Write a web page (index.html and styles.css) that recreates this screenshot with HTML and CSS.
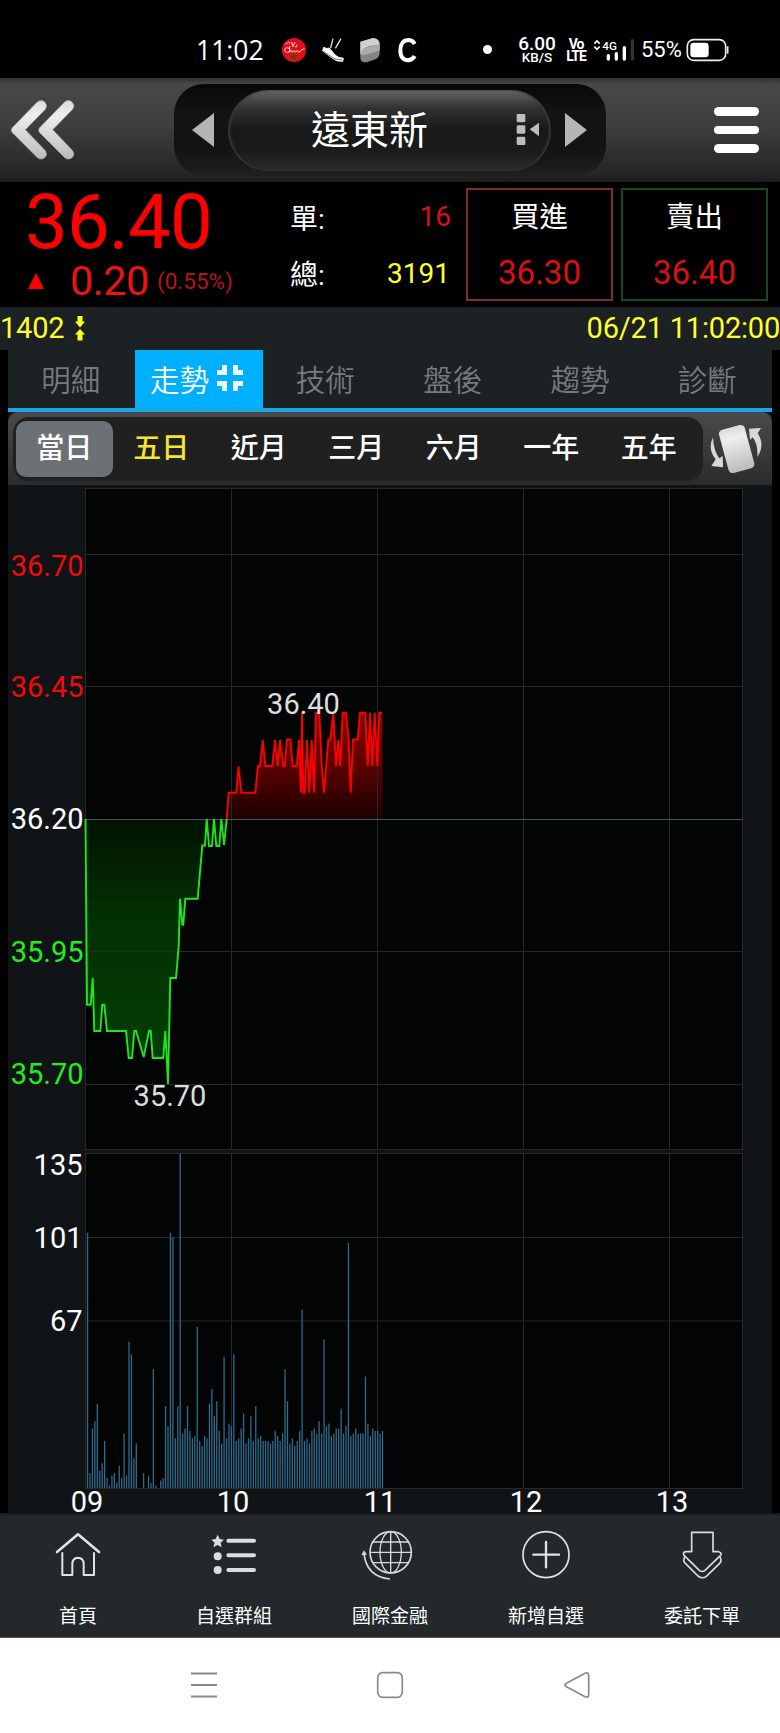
FILE: index.html
```html
<!DOCTYPE html>
<html lang="zh-Hant">
<head>
  <meta charset="UTF-8">
  <meta name="viewport" content="width=device-width, initial-scale=1.0">
  <title>遠東新 1402</title>
  <link rel="stylesheet" href="styles.css">
</head>
<body>
  <div class="status">
    <span class="clock">11:02</span>
    <svg class="app-red" width="26" height="26" viewBox="844 109 78 78">
      <circle cx="883" cy="148" r="36" fill="#e00e18"/>
      <g fill="none" stroke="#ffd9d9" stroke-width="3">
        <path d="M860 129q8-9 12 0M876 124l4 14 6-14M886 138q9 2 5-6M868 143q-12-6-13 6q3 11 13 4M870 136v19q4-11 9 0q5-10 9 0q5-10 9 0l9-7 8-4M858 128l-3 3"/>
      </g>
      <rect x="873" y="161" width="18" height="15" fill="#6d3d10"/>
    </svg>
    <svg class="app-shoe" width="24" height="26" viewBox="962 112 72 78">
      <path d="M970 143q9 6 17 2l17 21q9 9 25 10l-2 9q-18 1-29-8l-31-23z" fill="#fff" stroke="#fff" stroke-width="3"/>
      <path d="M969 155l32 22 25 4" fill="none" stroke="#222" stroke-width="2"/>
      <path d="M998 117l-7 28M1022 117l-17 29M987 146l5 8" fill="none" stroke="#ddd" stroke-width="4"/>
    </svg>
    <svg class="app-box" width="22" height="26" viewBox="1077 111 66 78">
      <path d="M1081 125l38-11q20 2 20 18v30q-2 12-17 17l-22 8q-19 1-19-14z" fill="#858585"/>
      <path d="M1081 125l38-11q20 2 20 20l-30 4q-22 5-25 22l-3 2z" fill="#d0d0d0"/>
      <path d="M1081 163q4-20 27-23l31-5v16l-35 12q-17 5-23 0z" fill="#acacac"/>
    </svg>
    <svg class="app-c" width="22" height="26" viewBox="51 111 66 78">
      <path d="M104 132q-6-12-20-12q-23 2-23 31q0 29 23 30q14-1 20-13" fill="none" stroke="#fff" stroke-width="12"/>
    </svg>
    <i class="dot"></i>
    <span class="speed"><b>6.00</b><b class="unit">KB/S</b></span>
    <span class="volte"><b>Vo</b><b>LTE</b></span>
    <svg class="signal" width="44" height="26" viewBox="639 111 132 78">
      <path d="M643 131l8-8 8 8M643 140l8 8 8-8" fill="none" stroke="#fff" stroke-width="5"/>
      <text x="667" y="149" class="sig-text">4G</text>
      <path d="M685 167v10M709 161v16M733 143v34" stroke="#fff" stroke-width="10" stroke-linecap="round"/>
      <path d="M757 122v55" stroke="#333" stroke-width="10" stroke-linecap="round"/>
    </svg>
    <span class="percent">55%</span>
    <svg class="battery" width="44" height="26" viewBox="922 111 132 78">
      <rect x="926" y="119" width="115" height="62" rx="19" fill="none" stroke="#eee" stroke-width="5"/>
      <rect x="935" y="128" width="55" height="44" rx="10" fill="#fff"/>
      <path d="M1047 139v22" stroke="#eee" stroke-width="5"/>
    </svg>
  </div>

  <header class="header">
    <svg class="back" width="70" height="64" viewBox="24 294 210 192">
      <defs>
        <linearGradient id="silver" x1="0" y1="0" x2="0" y2="1">
          <stop offset="0" stop-color="#dcdcdc"/>
          <stop offset=".25" stop-color="#eee"/>
          <stop offset="1" stop-color="#bbb"/>
        </linearGradient>
      </defs>
      <g fill="url(#silver)" stroke="#aaa" stroke-width="2">
        <path d="M36 384L111 307Q122 297 134 306Q144 316 136 328L76 389L136 452Q144 464 134 473Q122 482 111 472L36 397Q32 390 36 384Z"/>
        <path d="M118 384L193 307Q204 297 216 306Q226 316 218 328L158 389L218 452Q226 464 216 473Q204 482 193 472L118 397Q114 390 118 384Z"/>
      </g>
    </svg>
    <div class="selector">
      <svg width="22" height="34" viewBox="0 0 22 34"><path d="M0 17L22 0V34z" fill="#b5b5b5"/></svg>
      <div class="pill">
        <span class="stock-name">遠東新</span>
        <svg class="pick" width="24" height="34" viewBox="411 337 72 102">
          <g fill="#bdbdbd">
            <rect x="413" y="340" width="26" height="25" rx="4"/>
            <rect x="413" y="374" width="26" height="25" rx="4"/>
            <rect x="413" y="408" width="26" height="25" rx="4"/>
            <path d="M452 386l28-20v41z"/>
          </g>
        </svg>
      </div>
      <svg width="22" height="34" viewBox="0 0 22 34"><path d="M22 17L0 0V34z" fill="#b5b5b5"/></svg>
    </div>
    <div class="menu"><i></i><i></i><i></i></div>
  </header>

  <section class="quote">
    <div class="price">
      <div class="last">36.40</div>
      <div class="change">
        <svg width="16" height="16" viewBox="0 0 16 16"><path d="M8 0L16 16H0z" fill="#f00"/></svg>
        <span class="diff">0.20</span>
        <span class="pct">(0.55%)</span>
      </div>
    </div>
    <dl class="volume">
      <dt>單:</dt><dd class="red">16</dd>
      <dt>總:</dt><dd class="yellow">3191</dd>
    </dl>
    <div class="box buy"><span>買進</span><b>36.30</b></div>
    <div class="box sell"><span>賣出</span><b>36.40</b></div>
  </section>

  <div class="info">
    <span>1402</span>
    <svg class="swap" width="10" height="25" viewBox="0 0 10 25">
      <path d="M2.500 0H7.500V5.500H10L5 11.500L0 5.500H2.500zM2.500 24.500H7.500V18.500H10L5 13L0 18.500H2.500z" fill="#ff2"/>
    </svg>
    <span class="time">06/21 11:02:00</span>
  </div>

  <main class="panel">
    <nav class="tabs">
      <a>明細</a>
      <a class="active">走勢
        <svg width="28" height="28" viewBox="0 0 28 28">
          <path d="M8.500 1V8.500H1M19.500 1V8.500H27M8.500 27V19.500H1M19.500 27V19.500H27" fill="none" stroke="#eafaff" stroke-width="5"/>
        </svg>
      </a>
      <a>技術</a>
      <a>盤後</a>
      <a>趨勢</a>
      <a>診斷</a>
    </nav>

    <div class="range">
      <div class="range-list">
        <a class="on">當日</a>
        <a class="yellow">五日</a>
        <a>近月</a>
        <a>三月</a>
        <a>六月</a>
        <a>一年</a>
        <a>五年</a>
      </div>
      <svg class="rotate" width="54" height="50" viewBox="990 248 162 150">
        <rect x="1033" y="256" width="80" height="134" rx="13" transform="rotate(-15 1073 323)" fill="url(#silver)"/>
        <path d="M1002 288Q985 322 1010 354L997 374L1032 378L1031 344L1021 351Q1004 330 1002 288zM1110 262L1146 260L1136 276Q1159 310 1135 347Q1138 309 1121 288L1113 296z" fill="#d8d8d8"/>
      </svg>
    </div>

    <svg class="chart" width="764" height="1029" viewBox="8 484 764 1029">
      <defs>
        <linearGradient id="down" gradientUnits="userSpaceOnUse" x1="0" y1="819" x2="0" y2="1084">
          <stop offset="0" stop-color="#031203"/>
          <stop offset=".35" stop-color="#033003"/>
          <stop offset="1" stop-color="#044004"/>
        </linearGradient>
        <linearGradient id="up" gradientUnits="userSpaceOnUse" x1="0" y1="712" x2="0" y2="819">
          <stop offset="0" stop-color="#8a0000"/>
          <stop offset=".5" stop-color="#5c0000"/>
          <stop offset="1" stop-color="#1c0202"/>
        </linearGradient>
      </defs>
      <rect x="85" y="488" width="658" height="662" fill="#030504"/>
      <rect x="85" y="1153" width="658" height="335" fill="#030504"/>

      <path fill="url(#down)" d="M85.500 819L87 1004.700H90.700L92.700 978L94.300 1031H100.300L102.300 1004.700H104.300L107 1031H126L128.700 1058H132L134.300 1031H136L143.700 1057L149 1031H150.700L152.700 1058H163.300L165.300 1031L168 1084L170.300 978H176L178.700 946L180 898.700L182.300 924.700H183.300L185.300 898.700H197.700L202.300 845.500H205L206.700 819L209 846H212L214 819L216.300 846H219.300L221.300 819L224 845L226.700 819Z"/>
      <path fill="url(#up)" d="M226.700 819L228.700 792.700H236.300L238.500 766.300L241.300 792.700H255.300L258 766H260L262.700 740L265.300 766H272.300L275 740L277.700 766L280 740L283.300 766H284.700L287 739.500H290.300L292.700 766H296.700L299 740L301 792.700L302 712.700L303.300 792.700H304.700L307 740L309.300 792.700L311.700 740L314 792.700L316 712.700H319.300L321.700 766L324 792.700L328.300 739.500H330.300L333.300 712.700L336 766L338.300 740L340.300 766L342.700 712.700H346L348.700 740L350.700 792.700L353 739.500H357.700L360 712.700H365.300L367.700 766L370 712.700L372.300 766L374.700 712.700L377.300 766L379.300 712.700H382L383 819Z"/>

      <!-- grid -->
      <g stroke="#262929">
        <path d="M85.500 488V1150M231.500 488V1150M377.500 488V1150M523.500 488V1150M669.500 488V1150M742.500 488V1150"/>
        <path d="M85 488.500H743M85 554.500H743M85 686.500H743M85 951.500H743M85 1084.500H743M85 1149.500H743"/>
        <path d="M85.500 1153V1488M231.500 1153V1488M377.500 1153V1488M523.500 1153V1488M669.500 1153V1488M742.500 1153V1488"/>
        <path d="M85 1153.500H743M85 1237.500H743M85 1321H743M85 1488.500H743"/>
      </g>
      <path d="M85 819.500H743" stroke="#48565c"/>
      <g id="bars" fill="#306a8c"></g>

      <path class="line" stroke="#1fe51f" d="M85.500 819L87 1004.700H90.700L92.700 978L94.300 1031H100.300L102.300 1004.700H104.300L107 1031H126L128.700 1058H132L134.300 1031H136L143.700 1057L149 1031H150.700L152.700 1058H163.300L165.300 1031L168 1084L170.300 978H176L178.700 946L180 898.700L182.300 924.700H183.300L185.300 898.700H197.700L202.300 845.500H205L206.700 819L209 846H212L214 819L216.300 846H219.300L221.300 819L224 845L226.700 819"/>
      <path class="line" stroke="#fa0000" d="M226.700 819L228.700 792.700H236.300L238.500 766.300L241.300 792.700H255.300L258 766H260L262.700 740L265.300 766H272.300L275 740L277.700 766L280 740L283.300 766H284.700L287 739.500H290.300L292.700 766H296.700L299 740L301 792.700L302 712.700L303.300 792.700H304.700L307 740L309.300 792.700L311.700 740L314 792.700L316 712.700H319.300L321.700 766L324 792.700L328.300 739.500H330.300L333.300 712.700L336 766L338.300 740L340.300 766L342.700 712.700H346L348.700 740L350.700 792.700L353 739.500H357.700L360 712.700H365.300L367.700 766L370 712.700L372.300 766L374.700 712.700L377.300 766L379.300 712.700H382"/>

      <g class="axis" text-anchor="end">
        <text x="83.500" y="576" fill="#f00a0a">36.70</text>
        <text x="83.500" y="697" fill="#f00a0a">36.45</text>
        <text x="83.500" y="829" fill="#fff">36.20</text>
        <text x="83.500" y="962" fill="#1fee1f">35.95</text>
        <text x="83.500" y="1084" fill="#1fee1f">35.70</text>
        <text x="82.500" y="1175" fill="#fff">135</text>
        <text x="82.500" y="1248" fill="#fff">101</text>
        <text x="82.500" y="1331" fill="#fff">67</text>
      </g>
      <g class="axis" text-anchor="middle" fill="#fff">
        <text x="303.500" y="713.500" fill="#ddd">36.40</text>
        <text x="170" y="1106" fill="#ddd">35.70</text>
        <text x="87" y="1512">09</text>
        <text x="233" y="1512">10</text>
        <text x="380" y="1512">11</text>
        <text x="526" y="1512">12</text>
        <text x="672" y="1512">13</text>
      </g>
    </svg>
  </main>

  <footer class="bottom">
    <a>
      <svg width="48" height="50" viewBox="162 90 144 150">
        <g fill="none" stroke="#e2e2e2" stroke-width="6" stroke-linecap="round" stroke-linejoin="round">
          <path d="M171 156L234 103L297 156" stroke-width="8"/>
          <path d="M187 159V225H217V190Q218 174 234 173Q250 174 251 190V225H282V159"/>
        </g>
      </svg>
      首頁
    </a>
    <a>
      <svg width="48" height="50" viewBox="629 90 144 150">
        <path d="M652 104l6 13 13 2-10 9 3 14-12-7-13 7 4-14-10-9 13-2z" fill="#ddd"/>
        <circle cx="652" cy="169" r="12" fill="#ddd"/>
        <circle cx="652" cy="210" r="12" fill="#ddd"/>
        <path d="M684 122H761M684 166H761M684 210H761" stroke="#ddd" stroke-width="12" stroke-linecap="round"/>
      </svg>
      自選群組
    </a>
    <a>
      <svg class="globe" width="54" height="50" viewBox="1087 90 162 150">
        <g fill="none" stroke="#d6dadb" stroke-width="4">
          <circle cx="1176" cy="157" r="62" stroke-width="5"/>
          <ellipse cx="1176" cy="157" rx="32" ry="62"/>
          <path d="M1176 95V219M1114 157H1238M1122 126H1230M1122 188H1230"/>
          <path d="M1096 160Q1103 230 1174 237" stroke-width="5"/>
        </g>
        <path d="M1088 166L1096 151L1105 164z" fill="#d6dadb"/>
      </svg>
      國際金融
    </a>
    <a>
      <svg width="50" height="50" viewBox="423 89 150 150">
        <circle cx="498" cy="163" r="69" fill="none" stroke="#e2e2e2" stroke-width="5"/>
        <path d="M460 163H537M498 125V201" stroke="#e2e2e2" stroke-width="7" stroke-linecap="round"/>
      </svg>
      新增自選
    </a>
    <a>
      <svg width="44" height="50" viewBox="899 89 132 150">
        <g fill="none" stroke="#d9dcdd" stroke-width="5" stroke-linejoin="round">
          <path d="M934 96H998V154H1015Q1027 158 1020 166L974 210Q966 217 957 210L912 166Q905 157 916 154H934Z"/>
          <path d="M914 168Q907 180 913 187L953 227Q966 237 978 228L1018 189Q1026 181 1018 168"/>
        </g>
      </svg>
      委託下單
    </a>
  </footer>

  <div class="sysnav">
    <svg width="26" height="28" viewBox="0 0 26 28"><path d="M0 2.500H26M0 14H26M0 25.500H26" stroke="#8a8a8a" stroke-width="1.800"/></svg>
    <svg width="28" height="28" viewBox="0 0 28 28"><rect x="1.700" y="1.700" width="24.600" height="24.600" rx="5" fill="none" stroke="#8a8a8a" stroke-width="1.700"/></svg>
    <svg width="28" height="28" viewBox="0 0 28 28"><path d="M3 12.500L22 2.300Q25.500 1 25.700 4V24Q25.500 27 22 25.700L3 15.500Q1 14 3 12.500z" fill="none" stroke="#8a8a8a" stroke-width="1.700"/></svg>
  </div>

  <script>
    // volume per minute from 09:00
    const volumes = [
      103, 6, 24, 27, 34, 7, 10, 19, 4, 1, 5, 6, 2, 9, 4, 22, 5, 59, 54, 12,
      18, 0, 0, 6, 0, 5, 2, 48, 1, 0, 3, 4, 33, 25, 103, 101, 20, 33, 135, 22,
      24, 33, 23, 20, 21, 65, 19, 17, 21, 20, 34, 40, 29, 35, 23, 18, 53, 20, 26, 25,
      54, 19, 20, 24, 30, 18, 20, 29, 19, 33, 20, 21, 19, 19, 19, 18, 19, 23, 21, 19,
      22, 48, 35, 18, 20, 17, 19, 23, 72, 19, 20, 18, 23, 24, 22, 27, 22, 60, 25, 26,
      21, 22, 24, 24, 32, 22, 25, 99, 21, 22, 24, 22, 22, 22, 45, 26, 21, 24, 23, 23,
      22, 23
    ];
    const bars = document.getElementById('bars');
    volumes.forEach((v, i) => {
      const rect = document.createElementNS('http://www.w3.org/2000/svg', 'rect');
      const h = v * 334.5 / 135;
      rect.setAttribute('x', (86.9 + i * 2.438).toFixed(2));
      rect.setAttribute('y', (1488 - h).toFixed(1));
      rect.setAttribute('width', 1.3);
      rect.setAttribute('height', h.toFixed(1));
      bars.appendChild(rect);
    });
  </script>
</body>
</html>
```
FILE: styles.css
```css
* {
  box-sizing: border-box;
}

body {
  margin: 0;
  width: 780px;
  background: #000;
  color: #fff;
  font-family: Roboto, "Noto Sans CJK TC", sans-serif;
}

svg {
  display: block;
  flex: none;
}

.red {
  color: #dc1010;
}

.yellow {
  color: #ffff2a;
}

/* status bar */
.status {
  display: flex;
  align-items: center;
  height: 78px;
  padding: 21px 0 0 196px;
  font-family: "Open Sans", sans-serif;
}

.clock {
  width: 85px;
  font-size: 26.500px;
}

.app-shoe {
  margin-left: 14px;
}

.app-box {
  margin-left: 14px;
}

.app-c {
  margin-left: 16px;
}

.dot {
  width: 9px;
  height: 9px;
  margin-left: 64px;
  border-radius: 50%;
  background: #fff;
}

.speed,
.volte {
  display: flex;
  flex-direction: column;
  align-items: center;
  font-family: Roboto, sans-serif;
}

.speed {
  width: 38px;
  margin-left: 26px;
}

.speed b {
  font-size: 19px;
  line-height: 15px;
  font-weight: 500;
}

.speed .unit {
  font-size: 13.500px;
  line-height: 13px;
}

.volte {
  width: 18px;
  margin-left: 11px;
}

.volte b {
  font-size: 14px;
  line-height: 12px;
  letter-spacing: -1px;
}

.signal {
  margin-left: 8px;
}

.sig-text {
  font: 500 35px Roboto, sans-serif;
  fill: #fff;
}

.percent {
  width: 46px;
  margin-left: 4px;
  font: 22px Roboto, sans-serif;
}

.battery {
  margin-left: -1px;
}

/* header */
.header {
  display: grid;
  grid-template-columns: 174px 432px 174px;
  align-items: center;
  height: 104px;
  background: linear-gradient(#303030, #484848 6%, #3e3e3e 45%, #252525 94%, #1a1a1a);
}

.back {
  margin-left: 8px;
}

.selector {
  display: flex;
  align-items: center;
  justify-content: space-between;
  height: 92px;
  padding: 0 19px 0 18px;
  border-radius: 30px;
  background: linear-gradient(#080808, #131313 30%, #131313 70%, #202020);
}

.pill {
  display: flex;
  align-items: center;
  justify-content: flex-end;
  width: 323px;
  height: 81px;
  padding-right: 11px;
  border-radius: 41px;
  background: linear-gradient(#646464, #333 22%, #181818 48%, #1b1b1b 75%, #2b2b2b);
  box-shadow: inset 2px 0 2px #383838, inset -2px 0 2px #383838;
}

.stock-name {
  margin-right: 88px;
  padding-top: 2px;
  font-size: 39px;
  line-height: 60px;
}

.menu {
  display: flex;
  flex-direction: column;
  gap: 10px;
  width: 45px;
  margin-left: 108px;
}

.menu i {
  height: 8.500px;
  border-radius: 5px;
  background: #fff;
}

/* quote */
.quote {
  display: flex;
  height: 125px;
  padding-top: 6px;
}

.price {
  width: 290px;
  padding-left: 25px;
  color: #f00;
}

.last {
  height: 67px;
  font-size: 76px;
  line-height: 68px;
  letter-spacing: -0.800px;
}

.change {
  display: flex;
  align-items: center;
  height: 52px;
  padding-left: 3px;
}

.diff {
  width: 80px;
  margin-left: 26px;
  color: #ee1212;
  font-size: 41.500px;
  line-height: 44px;
  letter-spacing: -0.500px;
}

.pct {
  margin-left: 7px;
  color: #b51616;
  font-size: 22.500px;
}

.volume {
  display: grid;
  grid-template-columns: 60px 1fr;
  grid-template-rows: 57px 56px;
  align-items: center;
  width: 160px;
  margin: 0;
  font-size: 28px;
}

.volume dd {
  margin: 0;
  text-align: right;
}

.volume .red {
  margin-right: -1px;
}

.box {
  display: flex;
  flex-direction: column;
  align-items: center;
  width: 147px;
  height: 113px;
  margin-left: 16px;
  border: 2px solid #7c302c;
}

.box span {
  font-size: 28.500px;
  line-height: 56px;
}

.box b {
  color: #dc1010;
  font-size: 33px;
  font-weight: 400;
  line-height: 53px;
}

.sell {
  margin-left: 8px;
  border-color: #164a16;
}

/* code and time */
.info {
  display: flex;
  align-items: center;
  height: 43px;
  padding-bottom: 2px;
  background: #1c2124;
  color: #ffff2a;
  font-size: 29px;
  letter-spacing: -0.200px;
}

.swap {
  margin: 2px 0 0 11px;
}

.time {
  margin-left: auto;
}

/* main panel */
.panel {
  width: 764px;
  margin: 0 auto;
  background: #111417;
}

.tabs {
  display: grid;
  grid-template-columns: repeat(6, 1fr);
  height: 62px;
  border-bottom: 4px solid #1ba6e6;
  background: #1c2124;
}

.tabs a {
  display: flex;
  align-items: center;
  justify-content: center;
  gap: 7px;
  padding: 0 2px 2px 0;
  color: #747c7e;
  font-size: 29.500px;
  font-weight: 350;
}

.tabs .active {
  padding-right: 4px;
  background: #00b0ff;
  color: #fff;
}

.range {
  display: flex;
  align-items: center;
  height: 73px;
  padding-left: 5px;
  border-radius: 10px 10px 0 0;
  background: linear-gradient(#4a4a4a, #2b2b2b);
}

.range-list {
  display: grid;
  grid-template-columns: repeat(7, 97.500px);
  align-items: center;
  width: 690px;
  height: 64px;
  padding-left: 3px;
  border-radius: 16px;
  background: #202020;
}

.range-list a {
  padding-right: 2px;
  font-size: 28px;
  font-weight: 500;
  line-height: 56px;
  text-align: center;
}

.range-list .on {
  margin-right: 1px;
  padding-right: 0;
  border-radius: 10px;
  background: #6c7175;
}

.range-list .yellow {
  color: #f5e52c;
}

.rotate {
  margin-left: 6px;
}

.chart {
  margin-top: -1px;
  overflow: visible;
}

.line {
  fill: none;
  stroke-width: 1.900;
}

.axis {
  font-size: 29px;
}

/* bottom navigation */
.bottom {
  display: grid;
  grid-template-columns: repeat(5, 1fr);
  height: 125px;
  background: #23282b;
  border-top: 2px solid #191c1f;
  border-bottom: 1px solid #555;
}

.bottom a {
  display: flex;
  flex-direction: column;
  align-items: center;
  gap: 22px;
  padding-top: 15px;
  font-size: 19px;
  line-height: 30px;
}

.globe {
  margin-left: -4px;
}

/* system buttons */
.sysnav {
  display: flex;
  justify-content: center;
  gap: 159px;
  height: 95px;
  padding: 33px 0 0 1px;
  background: #fff;
}
```
